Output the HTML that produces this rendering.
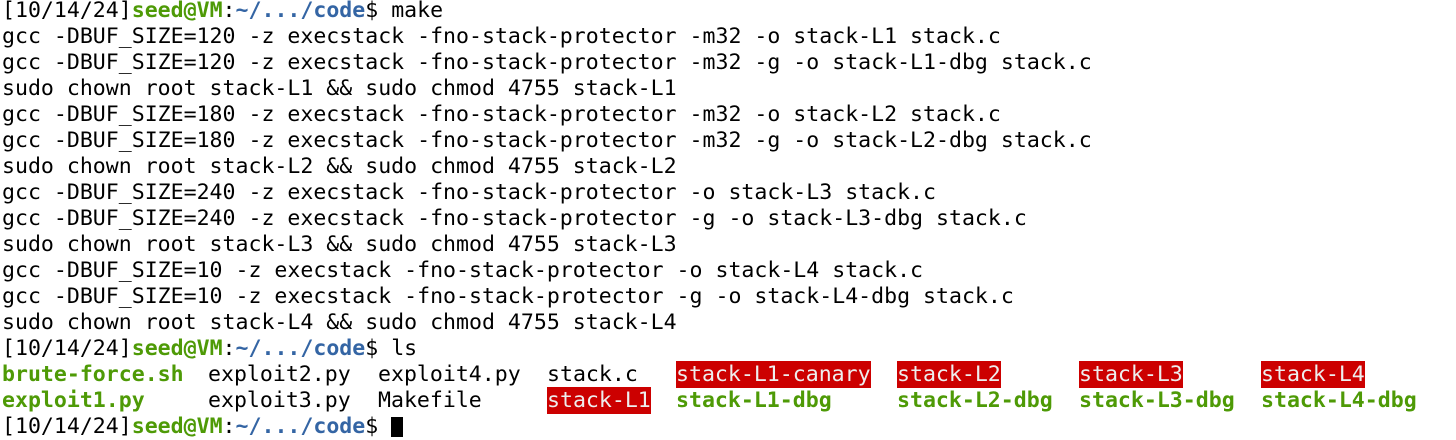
<!DOCTYPE html>
<html><head><style>
html,body{margin:0;padding:0;background:#fff;width:1456px;height:418px;overflow:hidden}
pre{margin:0;position:absolute;left:2px;top:-2px;font-family:"DejaVu Sans Mono","Liberation Mono",monospace;font-size:21.55px;line-height:26px;color:#000}
.g{color:#4e9a06;font-weight:bold}.b{color:#3465a4;font-weight:bold}
.r{background:#cc0000;color:#eee;padding:1px 0}
.ls{position:absolute;font-family:"DejaVu Sans Mono","Liberation Mono",monospace;font-size:21.55px;line-height:26px;white-space:pre;color:#000}
.cur{display:inline-block;width:12px;height:20px;background:#000;vertical-align:top;margin-top:3px}
</style></head><body>
<pre>[10/14/24]<span class="g">seed@VM</span>:<span class="b">~/.../code</span>$ make
gcc -DBUF_SIZE=120 -z execstack -fno-stack-protector -m32 -o stack-L1 stack.c
gcc -DBUF_SIZE=120 -z execstack -fno-stack-protector -m32 -g -o stack-L1-dbg stack.c
sudo chown root stack-L1 &amp;&amp; sudo chmod 4755 stack-L1
gcc -DBUF_SIZE=180 -z execstack -fno-stack-protector -m32 -o stack-L2 stack.c
gcc -DBUF_SIZE=180 -z execstack -fno-stack-protector -m32 -g -o stack-L2-dbg stack.c
sudo chown root stack-L2 &amp;&amp; sudo chmod 4755 stack-L2
gcc -DBUF_SIZE=240 -z execstack -fno-stack-protector -o stack-L3 stack.c
gcc -DBUF_SIZE=240 -z execstack -fno-stack-protector -g -o stack-L3-dbg stack.c
sudo chown root stack-L3 &amp;&amp; sudo chmod 4755 stack-L3
gcc -DBUF_SIZE=10 -z execstack -fno-stack-protector -o stack-L4 stack.c
gcc -DBUF_SIZE=10 -z execstack -fno-stack-protector -g -o stack-L4-dbg stack.c
sudo chown root stack-L4 &amp;&amp; sudo chmod 4755 stack-L4
[10/14/24]<span class="g">seed@VM</span>:<span class="b">~/.../code</span>$ ls


[10/14/24]<span class="g">seed@VM</span>:<span class="b">~/.../code</span>$ <span class="cur"></span></pre>
<div class="ls" style="top:362px;left:2px"><span class="g">brute-force.sh</span></div>
<div class="ls" style="top:362px;left:208px">exploit2.py</div>
<div class="ls" style="top:362px;left:378px">exploit4.py</div>
<div class="ls" style="top:362px;left:547px">stack.c</div>
<div class="ls" style="top:362px;left:676px"><span class="r">stack-L1-canary</span></div>
<div class="ls" style="top:362px;left:897px"><span class="r">stack-L2</span></div>
<div class="ls" style="top:362px;left:1079px"><span class="r">stack-L3</span></div>
<div class="ls" style="top:362px;left:1261px"><span class="r">stack-L4</span></div>
<div class="ls" style="top:388px;left:2px"><span class="g">exploit1.py</span></div>
<div class="ls" style="top:388px;left:208px">exploit3.py</div>
<div class="ls" style="top:388px;left:378px">Makefile</div>
<div class="ls" style="top:388px;left:547px"><span class="r">stack-L1</span></div>
<div class="ls" style="top:388px;left:676px"><span class="g">stack-L1-dbg</span></div>
<div class="ls" style="top:388px;left:897px"><span class="g">stack-L2-dbg</span></div>
<div class="ls" style="top:388px;left:1079px"><span class="g">stack-L3-dbg</span></div>
<div class="ls" style="top:388px;left:1261px"><span class="g">stack-L4-dbg</span></div>
</body></html>
